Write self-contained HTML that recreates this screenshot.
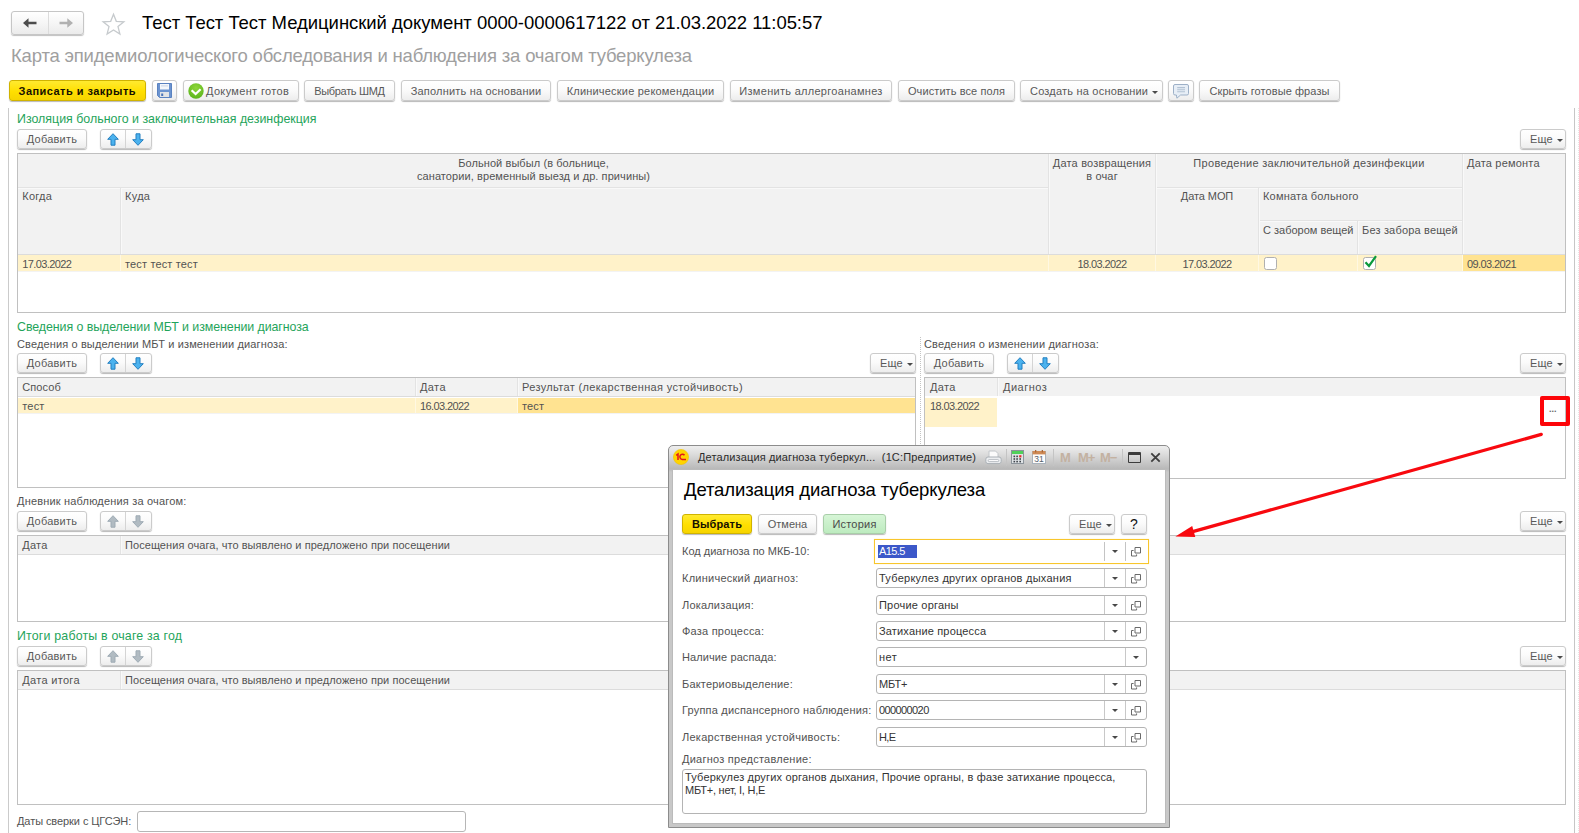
<!DOCTYPE html>
<html lang="ru">
<head>
<meta charset="utf-8">
<title>Медицинский документ</title>
<style>
*{box-sizing:border-box;margin:0;padding:0}
html,body{width:1579px;height:833px;overflow:hidden;background:#fff}
body{position:relative;font-family:"Liberation Sans",sans-serif;font-size:11px;color:#4a4a4a}
.a{position:absolute;white-space:nowrap}
.btn{position:absolute;height:21px;border:1px solid #cbcbcb;border-radius:3px;background:linear-gradient(#ffffff,#fbfbfb 45%,#ededed);box-shadow:0 1px 1px rgba(0,0,0,.28);font-size:11px;line-height:21px;text-align:center;color:#585858;white-space:nowrap;letter-spacing:.15px}
.btn.y{background:linear-gradient(#ffea30,#ffdf00 55%,#f6d400);border-color:#d0b300;color:#151000;font-weight:bold}
.btn.g{background:linear-gradient(#d6f5d6,#bdebbf);border-color:#a9cfa9;color:#4a4a4a}
.caret{display:inline-block;width:0;height:0;border-left:3px solid transparent;border-right:3px solid transparent;border-top:3.5px solid #4a4a4a;vertical-align:middle;margin-left:4px;margin-top:0px}
.gh{position:absolute;font-size:12.4px;color:#1fa45b;white-space:nowrap;line-height:15px}
.lbl{position:absolute;font-size:11px;color:#525252;white-space:nowrap;line-height:13px;letter-spacing:.15px}
.tbl{position:absolute;border:1px solid #c0c0c0;background:#fff;overflow:hidden}
.hd{position:absolute;background:#f2f2f2}
.vl{position:absolute;width:1px;background:#e3e3e3;box-shadow:1px 0 0 #f9f9f9}
.hl{position:absolute;height:1px;background:#e3e3e3;box-shadow:0 1px 0 #f9f9f9}
.n{box-shadow:none}
.t{position:absolute;font-size:11px;line-height:13px;color:#525252;white-space:nowrap;letter-spacing:.15px}
.row{position:absolute;background:#fff2c9}
.cell{position:absolute;background:#ffe391}
.d{letter-spacing:-.6px}
</style>
</head>
<body>
<!--HEADER-->
<div class="a" style="left:11px;top:11px;width:73px;height:24px;border:1px solid #c6c6c6;border-radius:3px;background:linear-gradient(#fff,#f4f4f4 60%,#ebebeb);box-shadow:0 1px 1px rgba(0,0,0,.25)"></div>
<div class="a" style="left:47.5px;top:12px;width:1px;height:22px;background:#dcdcdc"></div>
<svg class="a" style="left:21.8px;top:17.3px" width="16" height="12" viewBox="0 0 16 12"><path d="M1 6 L6.5 1.2 V4.7 H14.5 V7.3 H6.5 V10.8 Z" fill="#4d4d4d"/></svg>
<svg class="a" style="left:57.6px;top:17.2px" width="16" height="12" viewBox="0 0 16 12"><path d="M15 6 L9.3 1.2 V4.7 H1.5 V7.3 H9.3 V10.8 Z" fill="#b1b1b1"/></svg>
<svg class="a" style="left:101px;top:11.5px" width="25" height="24" viewBox="0 0 25 24"><path d="M12.5 2.2 L15.3 9.3 L22.9 9.8 L17 14.6 L18.9 22 L12.5 17.9 L6.1 22 L8 14.6 L2.1 9.8 L9.7 9.3 Z" fill="#fff" stroke="#c6cacd" stroke-width="1.3" stroke-linejoin="miter"/></svg>
<div class="a" id="ttl" style="left:142px;top:12px;font-size:18.5px;line-height:22px;color:#000;letter-spacing:-0.043px">Тест Тест Тест Медицинский документ 0000-0000617122 от 21.03.2022 11:05:57</div>
<div class="a" id="sub" style="left:11px;top:45px;font-size:18.5px;line-height:22px;color:#a0a0a0;letter-spacing:-0.186px">Карта эпидемиологического обследования и наблюдения за очагом туберкулеза</div>
<!--TOOLBAR-->
<div id="x1" class="btn y" style="left:8.5px;top:80px;width:137.5px;letter-spacing:0.469px">Записать и закрыть</div>
<div class="btn" style="left:152px;top:80px;width:25px"></div>
<svg class="a" style="left:157px;top:83px" width="15" height="15" viewBox="0 0 15 15"><path d="M0.5 0.5 H14.5 V14.5 H2.5 L0.5 12.5 Z" fill="#6c94d0" stroke="#5a82c0" stroke-width="1"/><rect x="3" y="1" width="9" height="5.5" fill="#f4f7fb"/><rect x="4" y="2.4" width="7" height="1" fill="#c9d5e6"/><rect x="3" y="9" width="9" height="5" fill="#e2e4e6"/><rect x="4.2" y="10.5" width="2" height="2.5" fill="#4a74b8"/></svg>
<div id="x2" class="btn" style="left:183px;top:80px;width:116px;text-align:left;padding-left:22px;letter-spacing:0.337px">Документ готов</div>
<svg class="a" style="left:188px;top:83px" width="16" height="16" viewBox="0 0 16 16"><defs><radialGradient id="gg" cx="50%" cy="30%" r="70%"><stop offset="0" stop-color="#8ed63a"/><stop offset="1" stop-color="#5cb51c"/></radialGradient></defs><circle cx="8" cy="8" r="7.7" fill="url(#gg)"/><path d="M3.6 7.2 L7.6 11 L12.6 6.2" fill="none" stroke="#fff" stroke-width="2.2" stroke-linejoin="miter"/></svg>
<div id="x3" class="btn" style="left:304px;top:80px;width:91px;letter-spacing:-0.331px">Выбрать ШМД</div>
<div id="x4" class="btn" style="left:401px;top:80px;width:150px;letter-spacing:0.199px">Заполнить на основании</div>
<div id="x5" class="btn" style="left:557px;top:80px;width:167px;letter-spacing:0.202px">Клинические рекомендации</div>
<div id="x6" class="btn" style="left:730px;top:80px;width:162px;letter-spacing:0.29px">Изменить аллергоанамнез</div>
<div id="x7" class="btn" style="left:898px;top:80px;width:117px;letter-spacing:0.091px">Очистить все поля</div>
<div id="x8" class="btn" style="left:1020px;top:80px;width:143px;text-align:left;padding-left:9px;letter-spacing:0.204px">Создать на основании<span class="caret"></span></div>
<div class="btn" style="left:1168px;top:80px;width:26px"></div>
<svg class="a" style="left:1173px;top:84px" width="17" height="15" viewBox="0 0 17 15"><path d="M2 0.5 H14 Q15.5 0.5 15.5 2 V9.5 Q15.5 11 14 11 H7.6 L3.9 14.2 L3.4 11 H2 Q0.5 11 0.5 9.5 V2 Q0.5 0.5 2 0.5 Z" fill="#e7eef6" stroke="#9db0c7" stroke-width="1" stroke-linejoin="round"/><path d="M4.2 3.6 H12 M4.2 5.7 H12 M4.2 7.8 H12" stroke="#b3c2d4" stroke-width="1.1"/></svg>
<div id="x9" class="btn" style="left:1199px;top:80px;width:141px;letter-spacing:0.088px">Скрыть готовые фразы</div>
<div class="a" style="left:8px;top:108px;width:1px;height:725px;background:#cbcbcb"></div>
<div class="a" style="left:1574px;top:108px;width:1px;height:725px;background:#c6c6c6"></div>
<div class="a" style="left:1578px;top:108px;width:0;height:725px;border-left:1px dotted #e6e6e6"></div>
<!--SECTION1-->
<div id="x10" class="gh" style="left:17px;top:112px;letter-spacing:0.008px">Изоляция больного и заключительная дезинфекция</div>
<div id="x11" class="btn" style="left:17px;top:129px;width:70px;height:20px;line-height:18px;letter-spacing:0.225px">Добавить</div>
<div class="btn" style="left:100px;top:129px;width:52px;height:20px"></div>
<div class="a" style="left:125px;top:130px;width:1px;height:18px;background:#d4d4d4"></div>
<svg class="a" style="left:107px;top:133px" width="12" height="13" viewBox="0 0 12 13"><path d="M6 0.7 L11.3 6.3 H8 V12.2 H4 V6.3 H0.7 Z" fill="#4bb2ee" stroke="#237fc0" stroke-width="1" stroke-linejoin="round"/></svg>
<svg class="a" style="left:132px;top:133px" width="12" height="13" viewBox="0 0 12 13"><path d="M6 12.3 L11.3 6.7 H8 V0.8 H4 V6.7 H0.7 Z" fill="#4bb2ee" stroke="#237fc0" stroke-width="1" stroke-linejoin="round"/></svg>
<div id="x12" class="btn" style="left:1520px;top:129px;width:46px;height:20px;line-height:18px;text-align:left;padding-left:9px">Еще<span class="caret"></span></div>

<div class="tbl" style="left:17px;top:153px;width:1549px;height:160px">
 <div class="hd" style="left:0;top:0;width:1547px;height:100px"></div>
 <div class="hl n" style="left:0;top:100px;width:1547px;background:#dcdcdc"></div>
 <div class="hl" style="left:0;top:33px;width:1031px"></div>
 <div class="hl" style="left:1138px;top:33px;width:306px"></div>
 <div class="hl" style="left:1240px;top:66px;width:204px"></div>
 <div class="vl" style="left:102px;top:34px;height:66px"></div>
 <div class="vl" style="left:1030px;top:0;height:100px"></div>
 <div class="vl" style="left:1137px;top:0;height:100px"></div>
 <div class="vl" style="left:1240px;top:34px;height:66px"></div>
 <div class="vl" style="left:1339px;top:67px;height:33px"></div>
 <div class="vl" style="left:1444px;top:0;height:100px"></div>
 <div id="x13" class="t" style="left:0;top:3px;width:1031px;text-align:center;white-space:normal;letter-spacing:0.084px">Больной выбыл (в больнице,<br>санатории, временный выезд и др. причины)</div>
 <div id="x14" class="t" style="left:1031px;top:3px;width:106px;text-align:center;white-space:normal;letter-spacing:0.181px">Дата возвращения<br>в очаг</div>
 <div id="x15" class="t" style="left:1138px;top:3px;width:306px;text-align:center;letter-spacing:0.294px">Проведение заключительной дезинфекции</div>
 <div id="x16" class="t" style="left:1449px;top:3px;letter-spacing:0.188px">Дата ремонта</div>
 <div id="x17" class="t" style="left:4.3px;top:36px;letter-spacing:0.227px">Когда</div>
 <div id="x18" class="t" style="left:107px;top:36px;letter-spacing:0.302px">Куда</div>
 <div id="x19" class="t" style="left:1138px;top:36px;width:102px;text-align:center;letter-spacing:-0.078px">Дата МОП</div>
 <div id="x20" class="t" style="left:1245px;top:36px;letter-spacing:0.197px">Комната больного</div>
 <div id="x21" class="t" style="left:1245px;top:70px;letter-spacing:0.002px">С забором вещей</div>
 <div id="x22" class="t" style="left:1344px;top:70px;letter-spacing:0.177px">Без забора вещей</div>
 <div class="row" style="left:0;top:101px;width:1547px;height:16px"></div>
 <div class="hl n" style="left:0;top:117px;width:1547px;background:#f3f3f3"></div>
 <div class="cell" style="left:1445px;top:101px;width:102px;height:16px"></div>
 <div class="vl n" style="left:102px;top:101px;height:16px;background:#fff8e2"></div>
 <div class="vl n" style="left:1030px;top:101px;height:16px;background:#fff8e2"></div>
 <div class="vl n" style="left:1137px;top:101px;height:16px;background:#fff8e2"></div>
 <div class="vl n" style="left:1240px;top:101px;height:16px;background:#fff8e2"></div>
 <div class="vl n" style="left:1339px;top:101px;height:16px;background:#fff8e2"></div>
 <div class="vl n" style="left:1444px;top:101px;height:16px;background:#fff8e2"></div>
 <div id="x23" class="t d" style="left:4.3px;top:104px">17.03.2022</div>
 <div id="x24" class="t" style="left:107px;top:104px">тест тест тест</div>
 <div id="x25" class="t d" style="left:1031px;top:104px;width:106px;text-align:center">18.03.2022</div>
 <div id="x26" class="t d" style="left:1138px;top:104px;width:102px;text-align:center">17.03.2022</div>
 <div id="x27" class="t d" style="left:1449px;top:104px">09.03.2021</div>
 <div class="a" style="left:1246px;top:103px;width:13px;height:13px;border:1px solid #b0b0b0;border-radius:2.5px;background:#fff"></div>
 <div class="a" style="left:1345px;top:103px;width:13px;height:13px;border:1px solid #b0b0b0;border-radius:2.5px;background:#fff"></div>
 <svg class="a" style="left:1346px;top:101px" width="14" height="14" viewBox="0 0 14 14"><path d="M1.5 7.2 L5 11 L12 1.2" fill="none" stroke="#0a9a3c" stroke-width="2.2"/></svg>
</div>
<!--SECTION2-->
<div id="x28" class="gh" style="left:17px;top:320px;letter-spacing:-0.067px">Сведения о выделении МБТ и изменении диагноза</div>
<div id="x29" class="lbl" style="left:17px;top:338px;letter-spacing:0.129px">Сведения о выделении МБТ и изменении диагноза:</div>
<div id="x30" class="btn" style="left:17px;top:353px;width:70px;height:20px;line-height:18px;letter-spacing:0.225px">Добавить</div>
<div class="btn" style="left:100px;top:353px;width:52px;height:20px"></div>
<div class="a" style="left:125px;top:354px;width:1px;height:18px;background:#d4d4d4"></div>
<svg class="a" style="left:107px;top:357px" width="12" height="13" viewBox="0 0 12 13"><path d="M6 0.7 L11.3 6.3 H8 V12.2 H4 V6.3 H0.7 Z" fill="#4bb2ee" stroke="#237fc0" stroke-width="1" stroke-linejoin="round"/></svg>
<svg class="a" style="left:132px;top:357px" width="12" height="13" viewBox="0 0 12 13"><path d="M6 12.3 L11.3 6.7 H8 V0.8 H4 V6.7 H0.7 Z" fill="#4bb2ee" stroke="#237fc0" stroke-width="1" stroke-linejoin="round"/></svg>
<div id="x31" class="btn" style="left:870px;top:353px;width:46px;height:20px;line-height:18px;text-align:left;padding-left:9px">Еще<span class="caret"></span></div>

<div class="tbl" style="left:17px;top:377px;width:899px;height:111px">
 <div class="hd" style="left:0;top:0;width:897px;height:18px"></div>
 <div class="hl n" style="left:0;top:18px;width:897px;background:#dcdcdc"></div>
 <div class="vl" style="left:397px;top:0;height:18px"></div>
 <div class="vl" style="left:499px;top:0;height:18px"></div>
 <div id="x32" class="t" style="left:4.3px;top:3px;letter-spacing:0.087px">Способ</div>
 <div id="x33" class="t" style="left:402px;top:3px;letter-spacing:0.38px">Дата</div>
 <div id="x34" class="t" style="left:504px;top:3px;letter-spacing:0.342px">Результат (лекарственная устойчивость)</div>
 <div class="row" style="left:0;top:20px;width:897px;height:15px"></div>
 <div class="hl n" style="left:0;top:35px;width:897px;background:#f3f3f3"></div>
 <div class="cell" style="left:500px;top:20px;width:397px;height:15px"></div>
 <div class="vl n" style="left:397px;top:20px;height:15px;background:#fff8e2"></div>
 <div class="vl n" style="left:499px;top:20px;height:15px;background:#fff8e2"></div>
 <div id="x35" class="t" style="left:4.3px;top:22px">тест</div>
 <div id="x36" class="t d" style="left:402px;top:22px">16.03.2022</div>
 <div id="x37" class="t" style="left:504px;top:22px">тест</div>
</div>
<div class="a" style="left:920px;top:337px;width:0;height:141px;border-left:1px dotted #c4c4c4"></div>
<div id="x38" class="lbl" style="left:924px;top:338px;letter-spacing:0.165px">Сведения о изменении диагноза:</div>
<div id="x39" class="btn" style="left:924px;top:353px;width:70px;height:20px;line-height:18px;letter-spacing:0.225px">Добавить</div>
<div class="btn" style="left:1007px;top:353px;width:52px;height:20px"></div>
<div class="a" style="left:1032px;top:354px;width:1px;height:18px;background:#d4d4d4"></div>
<svg class="a" style="left:1014px;top:357px" width="12" height="13" viewBox="0 0 12 13"><path d="M6 0.7 L11.3 6.3 H8 V12.2 H4 V6.3 H0.7 Z" fill="#4bb2ee" stroke="#237fc0" stroke-width="1" stroke-linejoin="round"/></svg>
<svg class="a" style="left:1039px;top:357px" width="12" height="13" viewBox="0 0 12 13"><path d="M6 12.3 L11.3 6.7 H8 V0.8 H4 V6.7 H0.7 Z" fill="#4bb2ee" stroke="#237fc0" stroke-width="1" stroke-linejoin="round"/></svg>
<div id="x40" class="btn" style="left:1520px;top:353px;width:46px;height:20px;line-height:18px;text-align:left;padding-left:9px">Еще<span class="caret"></span></div>

<div class="tbl" style="left:924px;top:377px;width:642px;height:102px">
 <div class="hd" style="left:0;top:0;width:640px;height:18px"></div>
 <div class="vl" style="left:72px;top:0;height:18px"></div>
 <div id="x41" class="t" style="left:5px;top:3px;letter-spacing:0.297px">Дата</div>
 <div id="x42" class="t" style="left:78px;top:3px;letter-spacing:0.484px">Диагноз</div>
 <div class="row" style="left:0;top:20px;width:72px;height:29px"></div>
 <div id="x43" class="t d" style="left:5px;top:22px">18.03.2022</div>
 <div id="x44" class="t" style="left:624px;top:25px;font-size:9px;font-weight:bold;letter-spacing:0;color:#666">...</div>
</div>
<div class="a" style="left:1539.5px;top:395.5px;width:30px;height:30px;border:4px solid #fd0509;border-radius:2px"></div>
<!--SECTION3-->
<div id="x45" class="lbl" style="left:17px;top:495px;letter-spacing:0.18px">Дневник наблюдения за очагом:</div>
<div id="x46" class="btn" style="left:17px;top:511px;width:70px;height:20px;line-height:18px;letter-spacing:0.225px">Добавить</div>
<div class="btn" style="left:100px;top:511px;width:52px;height:20px"></div>
<div class="a" style="left:125px;top:512px;width:1px;height:18px;background:#d4d4d4"></div>
<svg class="a" style="left:107px;top:515px" width="12" height="13" viewBox="0 0 12 13"><path d="M6 0.7 L11.3 6.3 H8 V12.2 H4 V6.3 H0.7 Z" fill="#b1bbc2" stroke="#9eabb4" stroke-width="1" stroke-linejoin="round"/></svg>
<svg class="a" style="left:132px;top:515px" width="12" height="13" viewBox="0 0 12 13"><path d="M6 12.3 L11.3 6.7 H8 V0.8 H4 V6.7 H0.7 Z" fill="#b1bbc2" stroke="#9eabb4" stroke-width="1" stroke-linejoin="round"/></svg>
<div id="x47" class="btn" style="left:1520px;top:511px;width:46px;height:20px;line-height:18px;text-align:left;padding-left:9px">Еще<span class="caret"></span></div>

<div class="tbl" style="left:17px;top:535px;width:1549px;height:87px">
 <div class="hd" style="left:0;top:0;width:1547px;height:18px"></div>
 <div class="hl n" style="left:0;top:18px;width:1547px;background:#dcdcdc"></div>
 <div class="vl" style="left:102px;top:0;height:18px"></div>
 <div id="x48" class="t" style="left:4.3px;top:3px;letter-spacing:0.214px">Дата</div>
 <div id="x49" class="t" style="left:107px;top:3px;letter-spacing:0.059px">Посещения очага, что выявлено и предложено при посещении</div>
</div>
<!--SECTION4-->
<div id="x50" class="gh" style="left:17px;top:629px;letter-spacing:0.176px">Итоги работы в очаге за год</div>
<div id="x51" class="btn" style="left:17px;top:646px;width:70px;height:20px;line-height:18px;letter-spacing:0.225px">Добавить</div>
<div class="btn" style="left:100px;top:646px;width:52px;height:20px"></div>
<div class="a" style="left:125px;top:647px;width:1px;height:18px;background:#d4d4d4"></div>
<svg class="a" style="left:107px;top:650px" width="12" height="13" viewBox="0 0 12 13"><path d="M6 0.7 L11.3 6.3 H8 V12.2 H4 V6.3 H0.7 Z" fill="#b1bbc2" stroke="#9eabb4" stroke-width="1" stroke-linejoin="round"/></svg>
<svg class="a" style="left:132px;top:650px" width="12" height="13" viewBox="0 0 12 13"><path d="M6 12.3 L11.3 6.7 H8 V0.8 H4 V6.7 H0.7 Z" fill="#b1bbc2" stroke="#9eabb4" stroke-width="1" stroke-linejoin="round"/></svg>
<div id="x52" class="btn" style="left:1520px;top:646px;width:46px;height:20px;line-height:18px;text-align:left;padding-left:9px">Еще<span class="caret"></span></div>

<div class="tbl" style="left:17px;top:670px;width:1549px;height:135px">
 <div class="hd" style="left:0;top:0;width:1547px;height:18px"></div>
 <div class="hl n" style="left:0;top:18px;width:1547px;background:#dcdcdc"></div>
 <div class="vl" style="left:102px;top:0;height:18px"></div>
 <div id="x53" class="t" style="left:4.3px;top:3px;letter-spacing:0.307px">Дата итога</div>
 <div id="x54" class="t" style="left:107px;top:3px;letter-spacing:0.059px">Посещения очага, что выявлено и предложено при посещении</div>
</div>
<!--FOOTER-->
<div id="x55" class="lbl" style="left:17px;top:815px;letter-spacing:-0.076px">Даты сверки с ЦГСЭН:</div>
<div class="a" style="left:137px;top:811px;width:329px;height:21px;border:1px solid #b6b6b6;border-radius:3px;background:#fff"></div>
<!--ARROW-->
<svg class="a" style="left:1160px;top:420px" width="400" height="130" viewBox="1160 420 400 130"><line x1="1541.3" y1="434.4" x2="1190" y2="532.4" stroke="#f8090f" stroke-width="3.2" stroke-linecap="round"/><path d="M1175.4 536.6 L1192.2 526 L1195.3 537 Z" fill="#f8090f"/></svg>
<!--DIALOG-->
<div class="a" id="dlg" style="left:668px;top:445px;width:502px;height:383px;border:1px solid #8c8c8c;border-radius:5px 5px 0 0;background:linear-gradient(#eeeeee 0,#dfdfdf 7px,#cecece 14px,#b8b8b8 23px,#c8c8c8 26px)"></div>
<div class="a" style="left:673px;top:470px;width:492px;height:353px;background:#fff;box-shadow:0 0 0 1px #bbbbbb"></div>
<svg class="a" style="left:673px;top:449px" width="16" height="16" viewBox="0 0 16 16"><circle cx="8" cy="8" r="7.6" fill="#ffd400" stroke="#f2c200" stroke-width=".6"/><path d="M3.2 6.3 L5 5 V11" fill="none" stroke="#e3151a" stroke-width="1.5"/><path d="M11.5 6.2 A2.6 2.6 0 1 0 9.2 10.4 H13" fill="none" stroke="#e3151a" stroke-width="1.5"/></svg>
<div class="t" id="dt" style="left:698px;top:451px;font-size:11px;line-height:13px;color:#2b2b2b;letter-spacing:0.128px">Детализация диагноза туберкул...&nbsp; (1С:Предприятие)</div>
<!--TBICONS-->
<svg class="a" style="left:985px;top:450px" width="17" height="15" viewBox="0 0 17 15"><path d="M4 1 H10.5 L13 3.5 V8 H4 Z" fill="#fbfbfb" stroke="#c2c6ca" stroke-width="1"/><rect x="0.8" y="7" width="15.4" height="6.6" rx="2.2" fill="#eceef0" stroke="#aab0b6" stroke-width="1"/><rect x="3.2" y="9.6" width="10.6" height="2" rx="1" fill="#fff" stroke="#aab0b6" stroke-width=".8"/></svg>
<div class="vl n" style="left:1006px;top:449px;height:17px;background:#c4c4c4"></div>
<svg class="a" style="left:1011px;top:450px" width="13" height="14" viewBox="0 0 13 14"><rect x=".5" y=".5" width="12" height="13" fill="#dfe3e6" stroke="#8c949b"/><rect x="1" y="1" width="11" height="3" fill="#4fd05a"/><g fill="#3c4148"><rect x="2.5" y="5.6" width="1.6" height="1.6"/><rect x="5.3" y="5.6" width="1.6" height="1.6"/><rect x="2.5" y="8.2" width="1.6" height="1.6"/><rect x="5.3" y="8.2" width="1.6" height="1.6"/><rect x="8.4" y="8.2" width="1.6" height="1.6"/><rect x="2.5" y="10.8" width="1.6" height="1.6"/><rect x="5.3" y="10.8" width="1.6" height="1.6"/><rect x="8.4" y="10.8" width="1.6" height="1.6"/></g><rect x="8.2" y="5.2" width="2.2" height="2.2" fill="#e8262c"/></svg>
<svg class="a" style="left:1032px;top:450px" width="14" height="14" viewBox="0 0 14 14"><rect x=".5" y="1.5" width="13" height="12" fill="#fdfdfd" stroke="#a9b2bb"/><rect x=".5" y="1" width="13" height="3.4" fill="#cf8a55"/><rect x="3" y="0" width="1.3" height="2.4" fill="#a9683a"/><rect x="9.7" y="0" width="1.3" height="2.4" fill="#a9683a"/><text x="7" y="12" font-family="Liberation Sans, sans-serif" font-size="8.5" text-anchor="middle" fill="#55606b">31</text></svg>
<div class="vl n" style="left:1053px;top:449px;height:17px;background:#c4c4c4"></div>
<div class="a" style="left:1060px;top:450px;font-size:13px;line-height:15px;font-weight:bold;color:#c3b1a1;letter-spacing:-.2px">M</div>
<div class="a" style="left:1078px;top:450px;font-size:13px;line-height:15px;font-weight:bold;color:#c3b1a1;letter-spacing:-1px">M+</div>
<div class="a" style="left:1100px;top:450px;font-size:13px;line-height:15px;font-weight:bold;color:#c3b1a1;letter-spacing:-1px">M&minus;</div>
<div class="vl n" style="left:1122px;top:449px;height:17px;background:#c4c4c4"></div>
<div class="a" style="left:1128px;top:452px;width:13px;height:11px;border:1.5px solid #3c3c3c;border-top-width:3px;border-radius:1px"></div>
<svg class="a" style="left:1150px;top:452px" width="11" height="11" viewBox="0 0 11 11"><path d="M1.3 1.3 L9.7 9.7 M9.7 1.3 L1.3 9.7" stroke="#3e3e3e" stroke-width="1.8"/></svg>
<div class="a" id="dh" style="left:684px;top:478px;font-size:18.5px;line-height:24px;color:#000;letter-spacing:-0.115px">Детализация диагноза туберкулеза</div>
<div id="x56" class="btn y" style="left:682px;top:514px;width:70px;height:20px;line-height:18px;letter-spacing:0.146px">Выбрать</div>
<div id="x57" class="btn" style="left:758px;top:514px;width:59px;height:20px;line-height:18px;letter-spacing:0.006px">Отмена</div>
<div id="x58" class="btn g" style="left:823px;top:514px;width:63px;height:20px;line-height:18px;letter-spacing:0.221px">История</div>
<div id="x59" class="btn" style="left:1069px;top:514px;width:46px;height:20px;line-height:18px;text-align:left;padding-left:9px">Еще<span class="caret"></span></div>
<div id="x60" class="btn" style="left:1121px;top:514px;width:26px;height:20px;line-height:18px;font-size:14px;color:#111;letter-spacing:0">?</div>
<div id="x61" class="lbl" style="left:682px;top:545px;letter-spacing:-0.006px">Код диагноза по МКБ-10:</div>
<div class="a" style="left:874px;top:539px;width:275px;height:24.5px;border:1.8px solid #f8c62c;box-shadow:0 0 1px #fbe3a0;background:#fff"></div>
<div class="a" style="left:878px;top:545px;width:39px;height:12.5px;background:#3c58c9"></div>
<div id="x62" class="t d" style="left:879px;top:545px;color:#fff">A15.5</div>
<div class="vl n" style="left:1104px;top:542px;height:19px;background:#c4c4c4"></div>
<div class="vl n" style="left:1125px;top:542px;height:19px;background:#c4c4c4"></div>
<div class="a" style="left:1112px;top:550px;width:0;height:0;border-left:3px solid transparent;border-right:3px solid transparent;border-top:3.6px solid #484848;margin-top:.4px"></div>
<svg class="a" style="left:1131px;top:547px" width="11" height="10" viewBox="0 0 11 10"><path d="M4 0.5 H9.5 V6 H4 Z" fill="#fff" stroke="#6a6a6a" stroke-width="1"/><path d="M2.6 3.5 H0.5 V9 H5.6 V7.4" fill="none" stroke="#6a6a6a" stroke-width="1"/></svg>
<div id="x63" class="lbl" style="left:682px;top:572px;letter-spacing:0.247px">Клинический диагноз:</div>
<div class="a" style="left:876px;top:568px;width:271px;height:20px;border:1px solid #b4b4b4;border-radius:3px;background:#fff"></div>
<div id="x64" class="t" style="left:879px;top:572px;color:#333;letter-spacing:0.248px">Туберкулез других органов дыхания</div>
<div class="vl n" style="left:1104px;top:569px;height:18px;background:#c8c8c8"></div>
<div class="vl n" style="left:1125px;top:569px;height:18px;background:#c8c8c8"></div>
<div class="a" style="left:1112px;top:577px;width:0;height:0;border-left:3px solid transparent;border-right:3px solid transparent;border-top:3.6px solid #484848;margin-top:.4px"></div>
<svg class="a" style="left:1131px;top:574px" width="11" height="10" viewBox="0 0 11 10"><path d="M4 0.5 H9.5 V6 H4 Z" fill="#fff" stroke="#6a6a6a" stroke-width="1"/><path d="M2.6 3.5 H0.5 V9 H5.6 V7.4" fill="none" stroke="#6a6a6a" stroke-width="1"/></svg>
<div id="x65" class="lbl" style="left:682px;top:599px;letter-spacing:0.186px">Локализация:</div>
<div class="a" style="left:876px;top:595px;width:271px;height:20px;border:1px solid #b4b4b4;border-radius:3px;background:#fff"></div>
<div id="x66" class="t" style="left:879px;top:599px;color:#333;letter-spacing:0.203px">Прочие органы</div>
<div class="vl n" style="left:1104px;top:596px;height:18px;background:#c8c8c8"></div>
<div class="vl n" style="left:1125px;top:596px;height:18px;background:#c8c8c8"></div>
<div class="a" style="left:1112px;top:604px;width:0;height:0;border-left:3px solid transparent;border-right:3px solid transparent;border-top:3.6px solid #484848;margin-top:.4px"></div>
<svg class="a" style="left:1131px;top:601px" width="11" height="10" viewBox="0 0 11 10"><path d="M4 0.5 H9.5 V6 H4 Z" fill="#fff" stroke="#6a6a6a" stroke-width="1"/><path d="M2.6 3.5 H0.5 V9 H5.6 V7.4" fill="none" stroke="#6a6a6a" stroke-width="1"/></svg>
<div id="x67" class="lbl" style="left:682px;top:625px;letter-spacing:0.213px">Фаза процесса:</div>
<div class="a" style="left:876px;top:621px;width:271px;height:20px;border:1px solid #b4b4b4;border-radius:3px;background:#fff"></div>
<div id="x68" class="t" style="left:879px;top:625px;color:#333;letter-spacing:0.165px">Затихание процесса</div>
<div class="vl n" style="left:1104px;top:622px;height:18px;background:#c8c8c8"></div>
<div class="vl n" style="left:1125px;top:622px;height:18px;background:#c8c8c8"></div>
<div class="a" style="left:1112px;top:630px;width:0;height:0;border-left:3px solid transparent;border-right:3px solid transparent;border-top:3.6px solid #484848;margin-top:.4px"></div>
<svg class="a" style="left:1131px;top:627px" width="11" height="10" viewBox="0 0 11 10"><path d="M4 0.5 H9.5 V6 H4 Z" fill="#fff" stroke="#6a6a6a" stroke-width="1"/><path d="M2.6 3.5 H0.5 V9 H5.6 V7.4" fill="none" stroke="#6a6a6a" stroke-width="1"/></svg>
<div id="x69" class="lbl" style="left:682px;top:651px;letter-spacing:0.095px">Наличие распада:</div>
<div class="a" style="left:876px;top:647px;width:271px;height:20px;border:1px solid #b4b4b4;border-radius:3px;background:#fff"></div>
<div id="x70" class="t" style="left:879px;top:651px;color:#333;letter-spacing:0.438px">нет</div>
<div class="vl n" style="left:1125px;top:648px;height:18px;background:#c8c8c8"></div>
<div class="a" style="left:1133px;top:656px;width:0;height:0;border-left:3px solid transparent;border-right:3px solid transparent;border-top:3.6px solid #484848;margin-top:.4px"></div>
<div id="x71" class="lbl" style="left:682px;top:678px;letter-spacing:0.188px">Бактериовыделение:</div>
<div class="a" style="left:876px;top:674px;width:271px;height:20px;border:1px solid #b4b4b4;border-radius:3px;background:#fff"></div>
<div id="x72" class="t" style="left:879px;top:678px;color:#333;letter-spacing:-0.177px">МБТ+</div>
<div class="vl n" style="left:1104px;top:675px;height:18px;background:#c8c8c8"></div>
<div class="vl n" style="left:1125px;top:675px;height:18px;background:#c8c8c8"></div>
<div class="a" style="left:1112px;top:683px;width:0;height:0;border-left:3px solid transparent;border-right:3px solid transparent;border-top:3.6px solid #484848;margin-top:.4px"></div>
<svg class="a" style="left:1131px;top:680px" width="11" height="10" viewBox="0 0 11 10"><path d="M4 0.5 H9.5 V6 H4 Z" fill="#fff" stroke="#6a6a6a" stroke-width="1"/><path d="M2.6 3.5 H0.5 V9 H5.6 V7.4" fill="none" stroke="#6a6a6a" stroke-width="1"/></svg>
<div id="x73" class="lbl" style="left:682px;top:704px;letter-spacing:0.195px">Группа диспансерного наблюдения:</div>
<div class="a" style="left:876px;top:700px;width:271px;height:20px;border:1px solid #b4b4b4;border-radius:3px;background:#fff"></div>
<div id="x74" class="t d" style="left:879px;top:704px;color:#333">000000020</div>
<div class="vl n" style="left:1104px;top:701px;height:18px;background:#c8c8c8"></div>
<div class="vl n" style="left:1125px;top:701px;height:18px;background:#c8c8c8"></div>
<div class="a" style="left:1112px;top:709px;width:0;height:0;border-left:3px solid transparent;border-right:3px solid transparent;border-top:3.6px solid #484848;margin-top:.4px"></div>
<svg class="a" style="left:1131px;top:706px" width="11" height="10" viewBox="0 0 11 10"><path d="M4 0.5 H9.5 V6 H4 Z" fill="#fff" stroke="#6a6a6a" stroke-width="1"/><path d="M2.6 3.5 H0.5 V9 H5.6 V7.4" fill="none" stroke="#6a6a6a" stroke-width="1"/></svg>
<div id="x75" class="lbl" style="left:682px;top:731px;letter-spacing:0.255px">Лекарственная устойчивость:</div>
<div class="a" style="left:876px;top:727px;width:271px;height:20px;border:1px solid #b4b4b4;border-radius:3px;background:#fff"></div>
<div id="x76" class="t" style="left:879px;top:731px;color:#333;letter-spacing:-0.672px">Н,Е</div>
<div class="vl n" style="left:1104px;top:728px;height:18px;background:#c8c8c8"></div>
<div class="vl n" style="left:1125px;top:728px;height:18px;background:#c8c8c8"></div>
<div class="a" style="left:1112px;top:736px;width:0;height:0;border-left:3px solid transparent;border-right:3px solid transparent;border-top:3.6px solid #484848;margin-top:.4px"></div>
<svg class="a" style="left:1131px;top:733px" width="11" height="10" viewBox="0 0 11 10"><path d="M4 0.5 H9.5 V6 H4 Z" fill="#fff" stroke="#6a6a6a" stroke-width="1"/><path d="M2.6 3.5 H0.5 V9 H5.6 V7.4" fill="none" stroke="#6a6a6a" stroke-width="1"/></svg>
<div id="x77" class="lbl" style="left:682px;top:753px;letter-spacing:0.246px">Диагноз представление:</div>
<div class="a" style="left:682px;top:769px;width:465px;height:45px;border:1px solid #b4b4b4;border-radius:3px;background:#fff"></div>
<div id="x78" class="t" style="left:685px;top:771px;color:#333;line-height:13px;letter-spacing:0.172px">Туберкулез других органов дыхания, Прочие органы, в фазе затихание процесса,</div>
<div id="x79" class="t" style="left:685px;top:784px;color:#333;line-height:13px;letter-spacing:-0.258px">МБТ+, нет, I, Н,Е</div>
</body>
</html>
